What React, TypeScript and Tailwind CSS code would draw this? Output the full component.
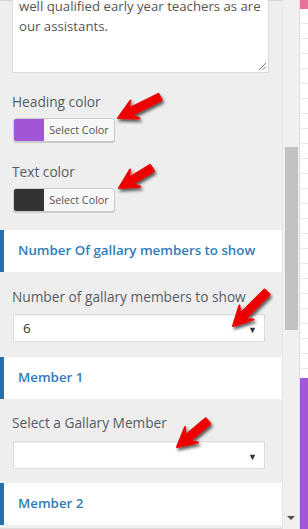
import React from "react";

type Pt = [number, number];

function arrowPoints(tail: Pt, tip: Pt): string {
  const dx = tip[0] - tail[0];
  const dy = tip[1] - tail[1];
  const len = Math.hypot(dx, dy);
  const d: Pt = [dx / len, dy / len];
  const n: Pt = [-d[1], d[0]];
  const h = 19;
  const w = 10;
  const s = 3.6;
  const p = (base: Pt, a: number, b: number): string =>
    `${(base[0] + d[0] * a + n[0] * b).toFixed(1)},${(base[1] + d[1] * a + n[1] * b).toFixed(1)}`;
  return [
    p(tip, 0, 0),
    p(tip, -h, w),
    p(tip, -h * 0.72, s),
    p(tail, 0, s),
    p(tail, 0, -s),
    p(tip, -h * 0.72, -s),
    p(tip, -h, -w),
  ].join(" ");
}

const arrows: [Pt, Pt][] = [
  [[160, 97], [118, 118]],
  [[152, 168], [119, 188]],
  [[267, 292], [233, 326]],
  [[208, 421], [177, 447]],
];

function Header({ title }: { title: string }) {
  return (
    <div className="h-[42px] bg-white border-l-4 border-[#2271b1] flex items-center pl-[14px]">
      <span className="text-[13.3px] font-semibold text-[#2e7cba]">{title}</span>
    </div>
  );
}

function ColorButton({ swatch }: { swatch: string }) {
  return (
    <div className="mt-[6px] ml-px flex h-[24px] w-[102px] rounded-[3px] border border-[#cccccc] bg-[#f7f7f7] shadow-[0_1px_0_#cccccc] overflow-hidden">
      <div className="w-[30px] h-full" style={{ backgroundColor: swatch }} />
      <div className="flex-1 flex items-center justify-center text-[10.8px] text-[#555555]">Select Color</div>
    </div>
  );
}

function SelectBox({ value }: { value: string }) {
  return (
    <div className="ml-px w-[252px] h-[28px] bg-white border border-[#dddddd] shadow-[inset_0_1px_2px_rgba(0,0,0,0.07)] flex items-center justify-between pl-[9px] pr-[7px] text-[13.5px] text-[#32373c]">
      <span>{value}</span>
      <span className="text-[9px] text-[#333333] mt-[3px]">▼</span>
    </div>
  );
}

export default function App() {
  const ticks = Array.from({ length: 24 }, (_, i) => i);
  return (
    <div
      className="relative w-[308px] h-[529px] overflow-hidden flex bg-white"
      style={{ fontFamily: '"Open Sans", "Noto Sans", sans-serif' }}
    >
      {/* left panel */}
      <div className="w-[282px] h-full bg-[#eeeeee] flex flex-col border-t border-[#d6d6d6]">
        <div className="px-3">
          <div className="relative mt-[-11px] h-[83px] w-[257px] bg-white border border-[#dddddd] pl-[6px] pt-[6px] text-[13.2px] leading-[19.5px] text-[#555555]">
            <div>well qualified early year teachers as are</div>
            <div>our assistants.</div>
            <svg className="absolute right-[1px] bottom-[1px]" width="9" height="9" viewBox="0 0 9 9">
              <line x1="1" y1="8" x2="8" y2="1" stroke="#777" strokeWidth="1" />
              <line x1="4.5" y1="8" x2="8" y2="4.5" stroke="#777" strokeWidth="1" />
            </svg>
          </div>

          <div className="mt-[19px] h-[20px] leading-[20px] text-[13.7px] text-[#555d66]">Heading color</div>
          <ColorButton swatch="#a256d7" />

          <div className="mt-[20px] h-[20px] leading-[20px] text-[13.7px] text-[#555d66]">Text color</div>
          <ColorButton swatch="#333333" />
        </div>

        <div className="mt-[18px]">
          <Header title="Number Of gallary members to show" />
        </div>

        <div className="px-3">
          <div className="mt-[15px] h-[20px] leading-[20px] text-[13.7px] text-[#555d66]">Number of gallary members to show</div>
          <div className="mt-[7px]">
            <SelectBox value="6" />
          </div>
        </div>

        <div className="mt-[15px]">
          <Header title="Member 1" />
        </div>

        <div className="px-3">
          <div className="mt-[14px] h-[20px] leading-[20px] text-[13.7px] text-[#555d66]">Select a Gallary Member</div>
          <div className="mt-[8px]">
            <SelectBox value="" />
          </div>
        </div>

        <div className="mt-[14px]">
          <Header title="Member 2" />
        </div>
        <div className="mt-[3px] h-px bg-[#dcdcdc]" />
      </div>

      {/* scrollbar */}
      <div className="w-[17px] h-full bg-[#f0f0f0] border-l border-[#e6e6e6] flex flex-col items-center pt-[147px]">
        <div className="w-[13px] h-[183px] bg-[#c1c1c1]" />
        <div className="mt-auto mb-[9px] w-0 h-0 border-l-[4px] border-r-[4px] border-t-[4px] border-l-transparent border-r-transparent border-t-[#505050]" />
      </div>

      {/* right strip */}
      <div className="w-[9px] h-full border-l border-[#dddddd] flex flex-col">
        <div className="h-[9px] bg-[#e8719b]" />
        <div className="h-[369px] bg-white flex flex-col pt-[14px] gap-[14px]">
          {ticks.map((i) => (
            <div key={i} className="h-px bg-[#e8e8e8]" />
          ))}
        </div>
        <div className="flex-1 bg-[#a356d6]" />
      </div>

      {/* annotation arrows */}
      <svg className="absolute inset-0 pointer-events-none" width="308" height="529" viewBox="0 0 308 529">
        <defs>
          <filter id="sh" x="-30%" y="-30%" width="160%" height="160%">
            <feDropShadow dx="1.5" dy="2.5" stdDeviation="1.6" floodColor="#000" floodOpacity="0.65" />
          </filter>
        </defs>
        {arrows.map(([tail, tip], i) => (
          <polygon
            key={i}
            points={arrowPoints(tail, tip)}
            fill="#ee0000"
            stroke="#ee0000"
            strokeWidth="2"
            strokeLinejoin="round"
            filter="url(#sh)"
          />
        ))}
      </svg>
    </div>
  );
}
